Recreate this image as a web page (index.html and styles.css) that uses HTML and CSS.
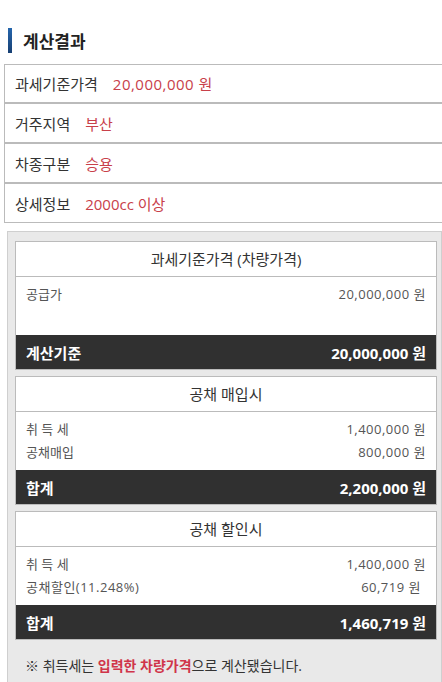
FILE: index.html
```html
<!DOCTYPE html>
<html lang="ko">
<head>
	<meta charset="UTF-8">
	<title>계산결과</title>
	<link rel="stylesheet" href="styles.css">
</head>
<body>
	<div id="wrap">
		<h2 class="title"><span class="bar"></span>계산결과</h2>
		<ul class="info">
			<li><span class="label">과세기준가격</span><span class="val num">20,000,000 원</span></li>
			<li><span class="label">거주지역</span><span class="val">부산</span></li>
			<li><span class="label">차종구분</span><span class="val">승용</span></li>
			<li><span class="label">상세정보</span><span class="val">2000cc 이상</span></li>
		</ul>
		<div class="panel">
			<div class="card">
				<h3>과세기준가격 (차량가격)</h3>
				<ul class="rows">
					<li><span>공급가</span><span class="num">20,000,000 원</span></li>
				</ul>
				<div class="total"><span>계산기준</span><span>20,000,000 원</span></div>
			</div>
			<div class="card">
				<h3>공채 매입시</h3>
				<ul class="rows">
					<li><span>취 득 세</span><span class="num">1,400,000 원</span></li>
					<li><span>공채매입</span><span class="num">800,000 원</span></li>
				</ul>
				<div class="total"><span>합계</span><span>2,200,000 원</span></div>
			</div>
			<div class="card">
				<h3>공채 할인시</h3>
				<ul class="rows">
					<li><span>취 득 세</span><span class="num">1,400,000 원</span></li>
					<li><span class="num">공채할인(11.248%)</span><span class="num indent">60,719 원</span></li>
				</ul>
				<div class="total"><span>합계</span><span>1,460,719 원</span></div>
			</div>
			<p class="note">※ 취득세는 <b>입력한 차량가격</b>으로 계산됐습니다.</p>
		</div>
	</div>
</body>
</html>
```

FILE: styles.css
```css
*{margin: 0;padding: 0;box-sizing: border-box;}
ul{list-style: none;}
body{
	background: #fff;
	font-family: "Open Sans", "Noto Sans CJK KR", sans-serif;
	color: #333;
	overflow: hidden;
}
#wrap{
	width: 442px;
	height: 682px;
	overflow: hidden;
}
.title{
	display: flex;
	align-items: center;
	height: 25px;
	margin: 28px 0 11px 8px;
	font-size: 17px;
	font-weight: bold;
	color: #222;
}
.title .bar{
	width: 4px;
	height: 25px;
	margin-right: 11px;
	background: linear-gradient(#2566ad, #173f72);
}
.info{
	margin-left: 4px;
	width: 440px;
	border: 1px solid #bbb;
}
.info li{
	display: flex;
	align-items: center;
	height: 40px;
	padding-left: 10px;
	font-size: 15px;
	border-bottom: 2px solid #bbb;
}
.info li:first-child{
	height: 39px;
}
.info li:last-child{
	border-bottom: 0;
	height: 38px;
}
.info .label{
	color: #333;
	margin-right: 15px;
}
.info .val{
	color: #c8404a;
}
.num{
	letter-spacing: 0.5px;
}
.panel{
	margin: 8px 0 0 7px;
	width: 435px;
	height: 460px;
	background: #e9e9e9;
	border: 1px solid #cfcfcf;
	border-bottom: 0;
	padding: 9px 4px 0 7px;
}
.card{
	background: #fff;
	border: 1px solid #bbb;
	margin-bottom: 6px;
}
.card h3{
	height: 35px;
	line-height: 34px;
	text-align: center;
	font-size: 15px;
	font-weight: normal;
	color: #333;
	border-bottom: 1px solid #bbb;
}
.rows{
	height: 58px;
	padding: 6px 10px 0;
}
.rows li{
	display: flex;
	justify-content: space-between;
	height: 23px;
	line-height: 23px;
	font-size: 13px;
	color: #555;
}
.rows .indent{
	padding-right: 5px;
}
.total{
	display: flex;
	justify-content: space-between;
	align-items: center;
	height: 34px;
	padding: 0 10px;
	background: #303030;
	color: #fff;
	font-size: 15px;
	font-weight: bold;
}
.note{
	padding: 9px 10px 0;
	font-size: 14px;
	color: #333;
}
.note b{
	color: #d0354a;
}
```
